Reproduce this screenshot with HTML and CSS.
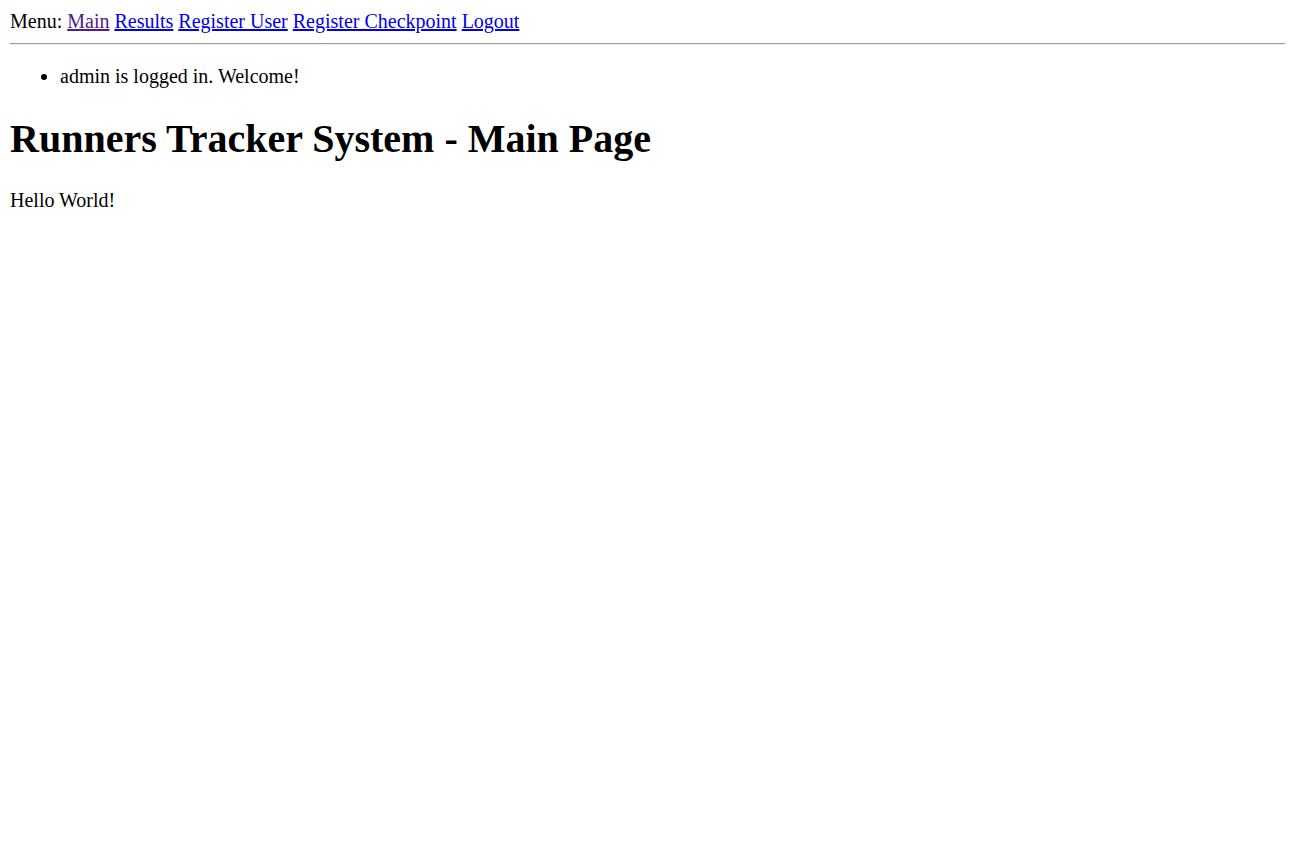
FILE: index.html
```html
<!DOCTYPE html>
<html>
<head>
<meta charset="utf-8">
<title>Runners Tracker System</title>
<link rel="stylesheet" href="styles.css">
</head>
<body>
<div class="menu">Menu: <a class="visited" href="#">Main</a> <a href="#">Results</a> <a href="#">Register User</a> <a href="#">Register Checkpoint</a> <a href="#">Logout</a></div>
<hr class="rule">
<ul class="messages">
<li>admin is logged in. Welcome!</li>
</ul>
<h1 class="title">Runners Tracker System - Main Page</h1>
<p class="content">Hello World!</p>
</body>
</html>
```

FILE: styles.css
```css
body {
  margin: 10px;
  font-family: "Liberation Serif", "Times New Roman", serif;
  font-size: 20px;
  color: #000;
  background: #fff;
}
.menu a {
  color: #0000ee;
}
.menu a.visited {
  color: #551a8b;
}
.rule {
  margin: 10px 0;
  border: none;
  border-top: 1px solid #9a9a9a;
  border-bottom: 1px solid #eeeeee;
  height: 0;
}
.messages {
  margin: 20px 0;
  padding-left: 50px;
}
.title {
  font-size: 40px;
  margin: 26.8px 0;
}
.content {
  margin: 20px 0;
}
```
